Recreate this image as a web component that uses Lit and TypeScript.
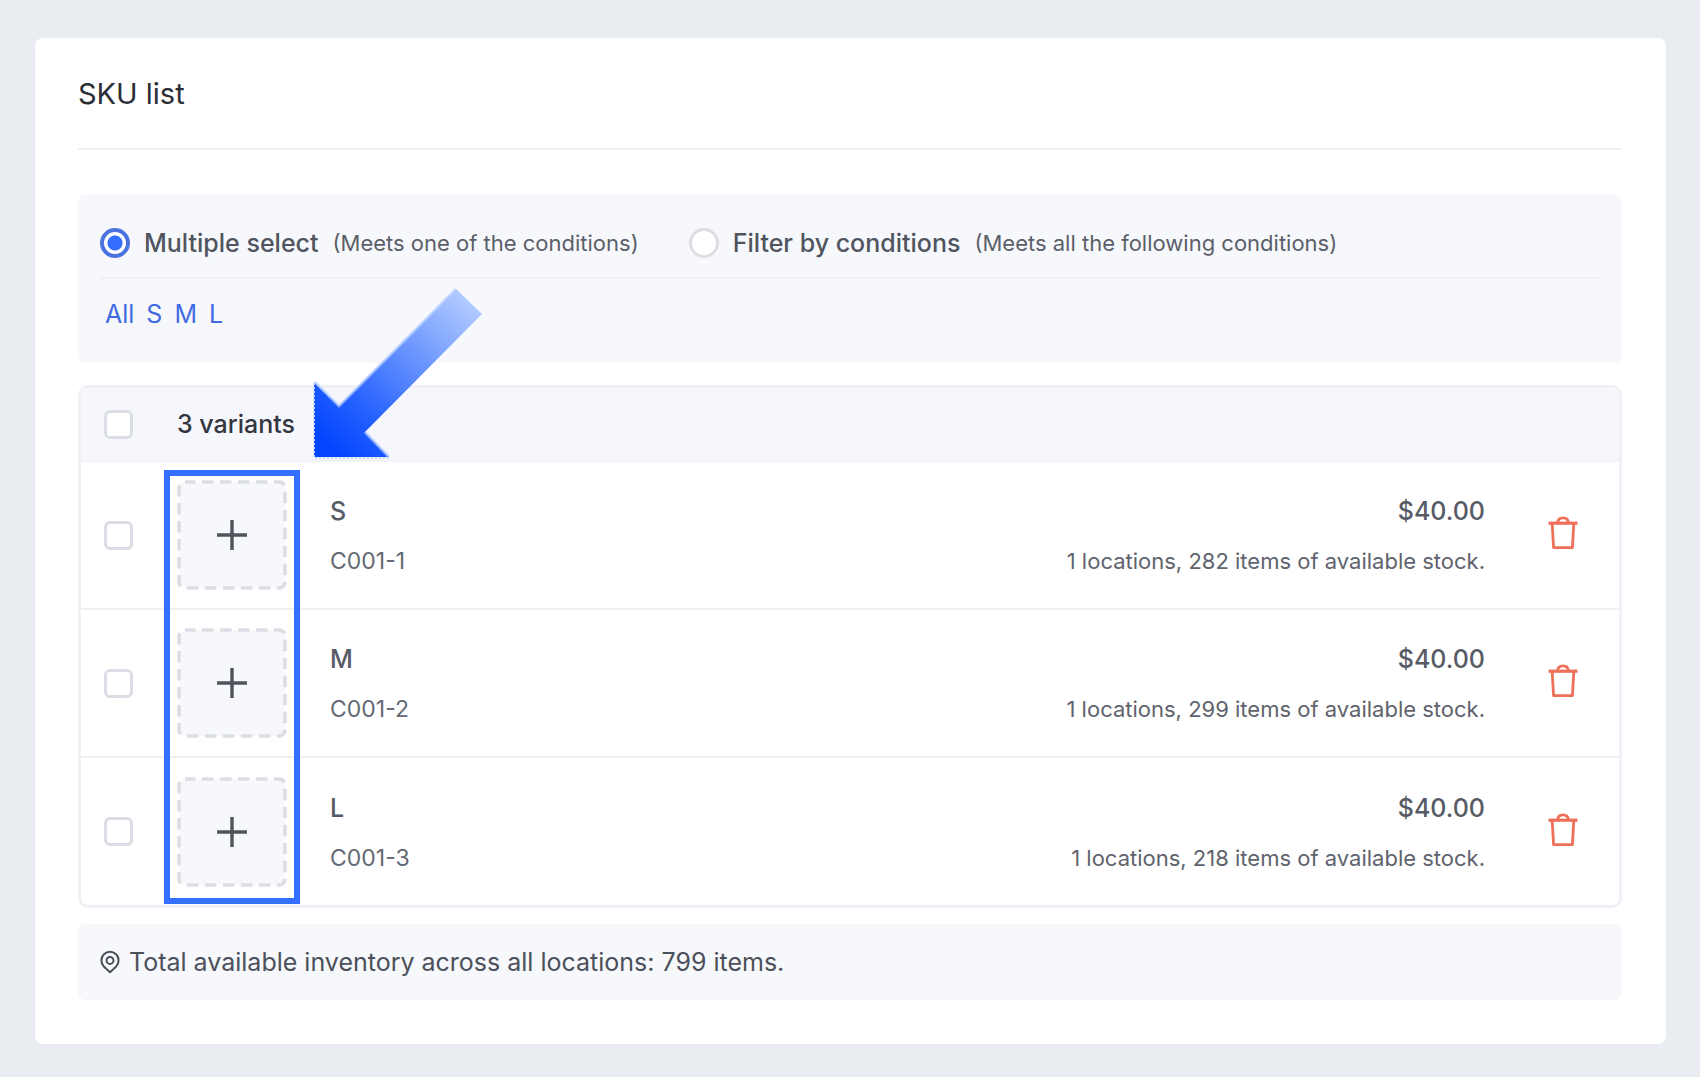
import { LitElement, html, css, svg } from "lit";
import { customElement, property, state } from "lit/decorators.js";

interface Variant {
  name: string;
  code: string;
  price: string;
  stock: number;
}

const VARIANTS: Variant[] = [
  { name: "S", code: "C001-1", price: "$40.00", stock: 282 },
  { name: "M", code: "C001-2", price: "$40.00", stock: 299 },
  { name: "L", code: "C001-3", price: "$40.00", stock: 218 },
];

// Dashed drop area with a plus sign in its middle.
const uploadIcon = svg`<svg class="tile" viewBox="0 0 110 110" aria-hidden="true">
  <rect x="2" y="2" width="106" height="106" rx="6" fill="#f7f8fc" stroke="#dcdee3" stroke-width="3.6" stroke-dasharray="11.5 6.5" stroke-dashoffset="1"/>
  <path d="M55 40V70M40 55H70" fill="none" stroke="#4f535c" stroke-width="3.4"/>
</svg>`;

const trashIcon = svg`<svg class="trash" viewBox="0 0 30 34" aria-hidden="true">
  <path d="M0.5 7.2H29.5" fill="none" stroke="#ee7058" stroke-width="3.2"/>
  <path d="M9.5 7C9.8 3.6 12 1.9 15 1.9S20.2 3.6 20.5 7" fill="none" stroke="#ee7058" stroke-width="2.6"/>
  <path d="M4.2 8L5.6 31.6H24.4L25.8 8" fill="none" stroke="#ee7058" stroke-width="2.8" stroke-linejoin="round"/>
</svg>`;

const pinIcon = svg`<svg class="pin" viewBox="0 0 20 24" aria-hidden="true">
  <path d="M10 22.2L3.8 16.4A8.6 8.6 0 1 1 16.2 16.4Z" fill="none" stroke="#4a4e57" stroke-width="2" stroke-linejoin="round"/>
  <circle cx="10" cy="10.4" r="3.5" fill="none" stroke="#4a4e57" stroke-width="2"/>
</svg>`;

@customElement("sku-filter")
export class SkuFilter extends LitElement {
  @state() private mode = "multiple";

  static styles = css`
    :host { display: block; }
    .panel {
      box-sizing: border-box;
      height: 169px;
      padding: 27px 22px 0;
      border-radius: 8px;
      background: #f7f8fc;
    }
    .modes {
      display: flex;
      align-items: center;
      gap: 50px;
      height: 44px;
      padding-bottom: 12px;
      border: 0;
      border-bottom: 2px solid #eef0f4;
    }
    .mode { display: flex; align-items: center; gap: 14px; white-space: nowrap; }
    .radio {
      appearance: none;
      box-sizing: border-box;
      flex: none;
      width: 30px;
      height: 30px;
      margin: 0;
      border: 3px solid #dcdee4;
      border-radius: 50%;
      background: #fff;
    }
    .radio:checked {
      border: 4px solid #4a72e0;
      background: radial-gradient(circle, #356dff 7px, #fff 8px);
    }
    .name { font-size: 25px; font-weight: 500; color: #50545e; }
    .hint { font-size: 22px; color: #5b5f69; }
    .options { display: flex; gap: 12px; padding: 17px 5px 0; }
    .option {
      color: #426be0;
      font-size: 25px;
      line-height: 36px;
      text-decoration: none;
    }
  `;

  private renderMode(value: string, name: string, hint: string) {
    return html`<label class="mode">
      <input class="radio" type="radio" name="mode" .checked=${this.mode === value}
        @change=${() => (this.mode = value)} />
      <span class="name">${name}</span>
      <span class="hint">${hint}</span>
    </label>`;
  }

  render() {
    return html`<div class="panel">
      <div class="modes" role="radiogroup" aria-label="Selection mode">
        ${this.renderMode("multiple", "Multiple select", "(Meets one of the conditions)")}
        ${this.renderMode("filter", "Filter by conditions", "(Meets all the following conditions)")}
      </div>
      <nav class="options">
        ${["All", "S", "M", "L"].map((o) => html`<a class="option" href="#${o}">${o}</a>`)}
      </nav>
    </div>`;
  }
}

@customElement("sku-table")
export class SkuTable extends LitElement {
  @property({ attribute: false }) variants: Variant[] = [];

  static styles = css`
    :host { display: block; }
    .frame {
      position: relative;
      border: 3px solid #eff1f6;
      border-radius: 10px;
    }
    .table { width: 100%; border-collapse: separate; border-spacing: 0; }
    .cell { padding: 0; text-align: left; font-weight: 400; }
    .head .cell {
      height: 72px;
      background: #f6f7fc;
      border-bottom: 2px solid #f1f3f7;
    }
    .row .cell { height: 146px; border-bottom: 2px solid #eff1f4; }
    .row:last-child .cell { height: 147px; border-bottom: 0; }
    .cell.pick { width: 96px; }
    .cell.media { width: 153px; }
    .cell.amount { text-align: right; }
    .cell.remove { width: 134px; }
    .check {
      appearance: none;
      display: block;
      box-sizing: border-box;
      width: 29px;
      height: 29px;
      margin: 0 0 0 23px;
      border: 3px solid #dadde4;
      border-radius: 6px;
      background: #fff;
    }
    .count { font-size: 25px; font-weight: 500; color: #333640; }
    .upload {
      display: block;
      padding: 0;
      border: 0;
      background: none;
    }
    .tile { display: block; width: 110px; height: 110px; }
    .lines {
      display: flex;
      flex-direction: column;
      gap: 14px;
      padding-top: 2px;
      line-height: 36px;
    }
    .main { font-size: 25px; font-weight: 500; color: #575b66; }
    .code { font-size: 23px; color: #656973; }
    .stock { font-size: 22px; color: #5f636d; }
    .delete {
      display: block;
      margin: 0 0 0 63px;
      padding: 0 0 4px;
      border: 0;
      background: none;
    }
    .trash { display: block; width: 30px; height: 34px; }
    .highlight {
      position: absolute;
      top: 82px;
      bottom: 1px;
      left: 83px;
      width: 124px;
      border: 6px solid #356fff;
      pointer-events: none;
    }
    .arrow {
      position: absolute;
      top: -101px;
      left: 232px;
      width: 172px;
      height: 172px;
      pointer-events: none;
    }
  `;

  private renderRow(v: Variant) {
    return html`<tr class="row">
      <td class="cell pick"><input class="check" type="checkbox" aria-label="Select ${v.name}" /></td>
      <td class="cell media">
        <button class="upload" type="button" aria-label="Add image for ${v.name}">${uploadIcon}</button>
      </td>
      <td class="cell">
        <div class="lines"><span class="main">${v.name}</span><span class="code">${v.code}</span></div>
      </td>
      <td class="cell amount">
        <div class="lines">
          <span class="main">${v.price}</span>
          <span class="stock">1 locations, ${v.stock} items of available stock.</span>
        </div>
      </td>
      <td class="cell remove">
        <button class="delete" type="button" aria-label="Delete ${v.name}">${trashIcon}</button>
      </td>
    </tr>`;
  }

  render() {
    return html`<div class="frame">
      <table class="table">
        <thead>
          <tr class="head">
            <th class="cell pick"><input class="check" type="checkbox" aria-label="Select all variants" /></th>
            <th class="cell count" colspan="4">${this.variants.length} variants</th>
          </tr>
        </thead>
        <tbody>${this.variants.map((v) => this.renderRow(v))}</tbody>
      </table>
      <div class="highlight"></div>
      <svg class="arrow" viewBox="0 0 172 172" aria-hidden="true">
        <defs>
          <linearGradient id="fade" gradientUnits="userSpaceOnUse" x1="15" y1="158" x2="158" y2="15">
            <stop offset="0" stop-color="#0345ff"/>
            <stop offset="0.25" stop-color="#2561ff"/>
            <stop offset="1" stop-color="#b2cbff"/>
          </linearGradient>
        </defs>
        <path d="M1 170V95L26 119L143 2L169 27L52 145L76 170Z" fill="url(#fade)"/>
        <path d="M2 95L26 119L143 2M52 145L76 170" fill="none" stroke="#b5ccff" stroke-opacity="0.65" stroke-width="3"/>
        <path d="M1 96V171H77" fill="none" stroke="#c5d7ff" stroke-width="2" stroke-dasharray="2 2"/>
      </svg>
    </div>`;
  }
}

@customElement("app-root")
export class AppRoot extends LitElement {
  static styles = css`
    :host {
      display: block;
      padding: 38px 34px 33px 35px;
      background: #e9ecf1;
      font-family: Inter, "Liberation Sans", sans-serif;
    }
    .card {
      padding: 32px 44px 44px 43px;
      border-radius: 8px;
      background: #fff;
    }
    .title {
      margin: 0 0 44px;
      padding-bottom: 30px;
      border-bottom: 2px solid #f0f1f4;
      color: #2c2e36;
      font-size: 29px;
      font-weight: 400;
      line-height: 48px;
    }
    .list { display: block; margin: 22px 0 16px; }
    .total {
      display: flex;
      align-items: center;
      gap: 9px;
      height: 76px;
      padding: 0 22px;
      border-radius: 8px;
      background: #f7f8fc;
      color: #4c505a;
      font-size: 25px;
    }
    .pin { width: 20px; height: 24px; }
  `;

  render() {
    const total = VARIANTS.reduce((sum, v) => sum + v.stock, 0);
    return html`<main class="card">
      <h1 class="title">SKU list</h1>
      <sku-filter></sku-filter>
      <sku-table class="list" .variants=${VARIANTS}></sku-table>
      <footer class="total">
        ${pinIcon}<span>Total available inventory across all locations: ${total} items.</span>
      </footer>
    </main>`;
  }
}
